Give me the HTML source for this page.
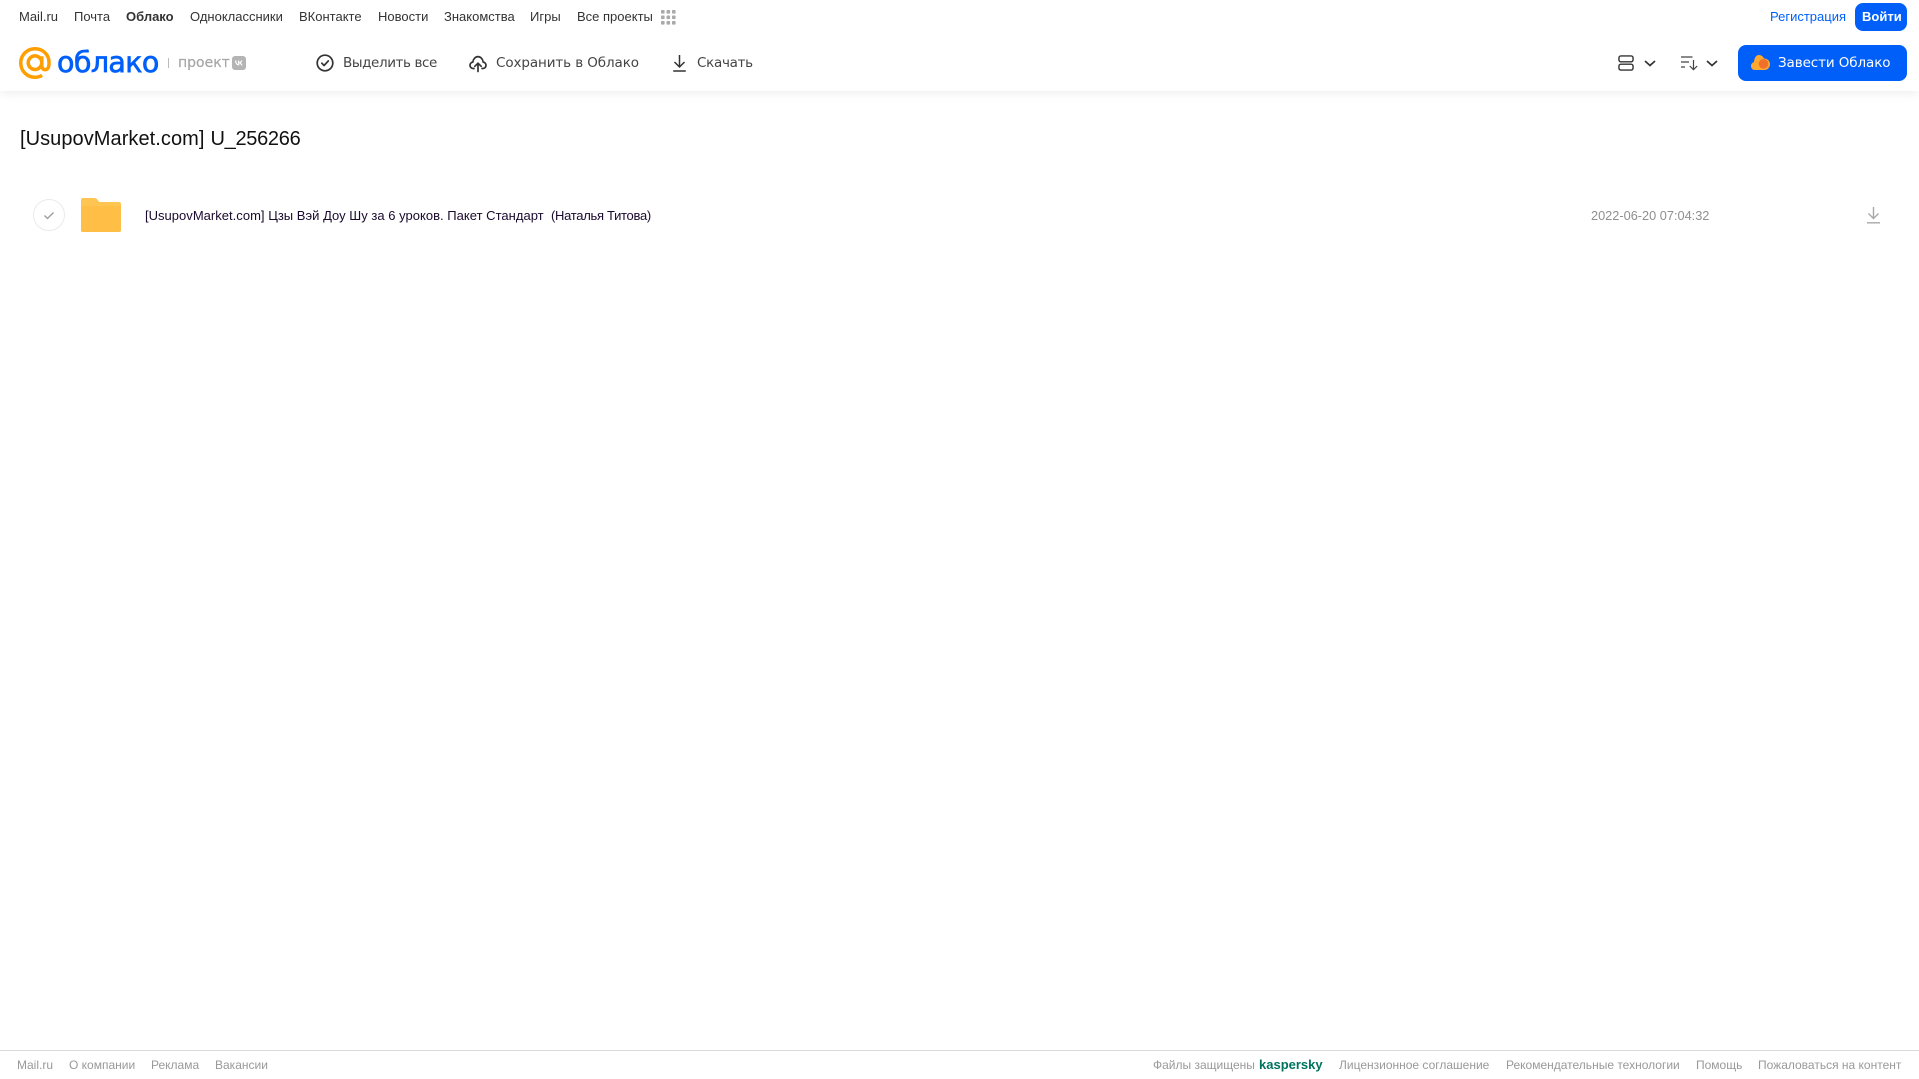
<!DOCTYPE html>
<html lang="ru">
<head>
<meta charset="utf-8">
<title>Облако</title>
<style>
html,body{margin:0;padding:0;background:#fff;width:1919px;height:1079px;overflow:hidden}
body{position:relative;font-family:"Liberation Sans",Arial,sans-serif}
.t{position:absolute;white-space:pre;line-height:20px}
.n{top:7px;font-size:13px;color:#333}
.b{top:53px;color:#444;font-family:"DejaVu Sans",sans-serif;font-size:13.5px}
.f{top:1055px;font-size:12px;color:#999}
svg{position:absolute;overflow:visible}
#hd{position:absolute;left:0;top:0;width:1919px;height:91px;background:#fff;box-shadow:0 2px 10px rgba(0,0,0,.07)}
</style>
</head>
<body>
<div id="hd"></div>
<span class="t n" style="left:19px">Mail.ru</span>
<span class="t n" style="left:74px">Почта</span>
<span class="t n" style="left:126px;font-weight:bold">Облако</span>
<span class="t n" style="left:190px">Одноклассники</span>
<span class="t n" style="left:299px">ВКонтакте</span>
<span class="t n" style="left:378px">Новости</span>
<span class="t n" style="left:444px">Знакомства</span>
<span class="t n" style="left:530px">Игры</span>
<span class="t n" style="left:577px">Все проекты</span>
<svg style="left:661px;top:10px" width="15" height="15" viewBox="0 0 15 15" fill="#aaa"><rect x="0" y="0" width="3.6" height="3.6" rx=".8"/><rect x="5.5" y="0" width="3.6" height="3.6" rx=".8"/><rect x="11" y="0" width="3.6" height="3.6" rx=".8"/><rect x="0" y="5.5" width="3.6" height="3.6" rx=".8"/><rect x="5.5" y="5.5" width="3.6" height="3.6" rx=".8"/><rect x="11" y="5.5" width="3.6" height="3.6" rx=".8"/><rect x="0" y="11" width="3.6" height="3.6" rx=".8"/><rect x="5.5" y="11" width="3.6" height="3.6" rx=".8"/><rect x="11" y="11" width="3.6" height="3.6" rx=".8"/></svg>
<span class="t n" style="left:1770px;color:#005ff9">Регистрация</span>
<div style="position:absolute;left:1855px;top:3px;width:52px;height:28px;background:#005ff9;border-radius:8px"></div>
<span class="t n" style="left:1862px;color:#fff;font-weight:bold">Войти</span>

<svg style="left:19px;top:47px" width="32" height="32" viewBox="0 0 33 33" fill="none" stroke="#ff9e00" stroke-width="3.6"><circle cx="16.5" cy="16.2" r="7"/><path d="M23.5 9.5v9.5c0 3 1.600 4.400 3.600 4.400 2.300 0 3.900-2.300 3.900-7.200C31 7.700 24.500 1.800 16.500 1.800 8.300 1.800 1.800 8.300 1.800 16.500s6.500 14.700 14.700 14.700c2.800 0 5.200-.7 7.300-2"/></svg>
<span class="t" style="left:57px;top:47px;font-size:28.5px;line-height:32px;color:#005ff9;font-family:'DejaVu Sans',sans-serif;letter-spacing:-.6px;-webkit-text-stroke:.7px #005ff9">облако</span>
<div style="position:absolute;left:168px;top:58px;width:1px;height:10px;background:#bbb"></div>
<span class="t" style="left:178px;top:53px;font-size:14px;color:#a6a6a6;font-family:'DejaVu Sans',sans-serif;-webkit-text-stroke:.2px #a6a6a6">проект</span>
<svg style="left:232px;top:56px" width="14" height="14" viewBox="0 0 14 14"><rect width="14" height="14" rx="3" fill="#b4b4b4"/><path d="M3 4.500c.1 3 1.600 5 4.200 5V7.300c1 .1 1.700.9 2 2.200h1.300c-.3-1.300-1-2.200-1.800-2.600.8-.5 1.300-1.300 1.500-2.400H9c-.3 1-1 1.700-1.800 1.900V4.500H6v3.800C5 8 4.300 6.500 4.300 4.500z" fill="#fff"/></svg>

<svg style="left:316px;top:54px" width="18" height="18" viewBox="0 0 18 18" fill="none" stroke="#333" stroke-width="1.700"><circle cx="9" cy="9" r="7.800"/><path d="M5.800 9.200l2.300 2.300 4.200-4.600" stroke-linecap="round" stroke-linejoin="round"/></svg>
<span class="t b" style="left:343px;letter-spacing:-.4px">Выделить все</span>
<svg style="left:469px;top:54px" width="18" height="18" viewBox="0 0 18 18" fill="none" stroke="#333" stroke-width="1.700" stroke-linecap="round" stroke-linejoin="round"><path d="M5 14.500H4.200C2.300 14.500 1 13 1 11.300c0-1.600 1.200-3 2.800-3.200C4.200 5 6.400 2.600 9 2.600s4.800 2.400 5.200 5.500c1.600.2 2.800 1.600 2.800 3.200 0 1.700-1.300 3.200-3.200 3.200H13"/><path d="M9 17.500V9.500M5.800 12.300L9 9.200l3.200 3.100"/></svg>
<span class="t b" style="left:496px;letter-spacing:-.1px">Сохранить в Облако</span>
<svg style="left:671.500px;top:54px" width="15" height="18" viewBox="0 0 15 18" fill="none" stroke="#333" stroke-width="1.500"><path d="M7.500 1v11.500M2.500 8l5 5 5-5"/><path d="M1.200 17h12.600"/></svg>
<span class="t b" style="left:697px;letter-spacing:-.3px">Скачать</span>

<svg style="left:1618px;top:55px" width="16" height="16" viewBox="0 0 17 17" fill="none" stroke="#333" stroke-width="1.500"><rect x="1" y="1" width="15" height="6.200" rx="2"/><rect x="1" y="9.800" width="15" height="6.200" rx="2"/></svg>
<svg style="left:1644px;top:60px" width="12" height="7" viewBox="0 0 12 7" fill="none" stroke="#333" stroke-width="1.700"><path d="M1 1l5 4.500L11 1"/></svg>
<svg style="left:1681px;top:56px" width="17" height="15" viewBox="0 0 17 15" fill="none" stroke="#444" stroke-width="1.200"><path d="M0 1h11.500M0 6h8M0 11h4"/><path d="M12.500 4v9.500M8.800 10l3.700 3.700L16.200 10"/></svg>
<svg style="left:1706px;top:60px" width="12" height="7" viewBox="0 0 12 7" fill="none" stroke="#333" stroke-width="1.700"><path d="M1 1l5 4.500L11 1"/></svg>
<div style="position:absolute;left:1738px;top:45px;width:169px;height:36px;background:#005ff9;border-radius:8px"></div>
<svg style="left:1751px;top:54px" width="19" height="17" viewBox="0 0 19 17"><path d="M4 16C1.700 16 0 14.300 0 12c0-2 1.300-3.500 3-3.900C3.300 4 5 1 8 1c2.300 0 4 1.500 5 3.500 3.500 0 6 2.500 6 5.700 0 3.300-2.500 5.800-5.700 5.800z" fill="#ffa930"/><circle cx="12.500" cy="9.800" r="4.800" fill="#f2702a"/></svg>
<span class="t b" style="left:1778px;color:#fff;letter-spacing:-.1px">Завести Облако</span>

<span class="t" style="left:20px;top:127px;font-size:20px;line-height:24px;color:#111;letter-spacing:.06px">[UsupovMarket.com]</span>
<span class="t" style="left:210.500px;top:127px;font-size:20px;line-height:24px;color:#111;letter-spacing:-.3px">U_256266</span>

<div style="position:absolute;left:33px;top:199px;width:30px;height:30px;border:1px solid #eaeaea;border-radius:50%"></div>
<svg style="left:43px;top:211px" width="12" height="9" viewBox="0 0 12 9" fill="none" stroke="#999" stroke-width="1.300"><path d="M1.500 4.500l3 3 6-6"/></svg>
<svg style="left:81px;top:198px" width="40" height="34" viewBox="0 0 40 34"><path d="M2 0h11c2 0 3 .8 4 2.500 .6 1 1.200 1.500 2.500 1.500H38c1.200 0 2 .8 2 2v26c0 1.200-.8 2-2 2H2c-1.200 0-2-.8-2-2V2C0 .8.800 0 2 0z" fill="#ffc552"/><path d="M0 8h40v24c0 1.200-.8 2-2 2H2c-1.200 0-2-.8-2-2z" fill="#ffbe45"/></svg>
<span class="t" style="left:145px;top:206px;font-size:13px;letter-spacing:.02px;color:#1a0a2e">[UsupovMarket.com] Цзы Вэй Доу Шу за 6 уроков. Пакет Стандарт</span>
<span class="t" style="left:551px;top:206px;font-size:13px;letter-spacing:-.3px;color:#1a0a2e">(Наталья Титова)</span>
<span class="t" style="left:1591px;top:206px;font-size:12.750px;color:#8f8f8f">2022-06-20 07:04:32</span>
<svg style="left:1867px;top:207px" width="13" height="17" viewBox="0 0 13 17" fill="none" stroke="#a8a8a8" stroke-width="1.400"><path d="M6.500 0v11M1.500 6.500l5 5 5-5"/><path d="M0 15.800h13"/></svg>

<div style="position:absolute;left:0;top:1050px;width:1919px;height:1px;background:#d9d9d9"></div>
<span class="t f" style="left:17px">Mail.ru</span>
<span class="t f" style="left:69px">О компании</span>
<span class="t f" style="left:151px">Реклама</span>
<span class="t f" style="left:215px">Вакансии</span>
<span class="t f" style="left:1153px">Файлы защищены</span>
<span class="t f" style="left:1259px;color:#00735f;font-weight:bold;font-size:13px">kaspersky</span>
<span class="t f" style="left:1339px">Лицензионное соглашение</span>
<span class="t f" style="left:1506px">Рекомендательные технологии</span>
<span class="t f" style="left:1696px">Помощь</span>
<span class="t f" style="left:1758px">Пожаловаться на контент</span>
</body>
</html>
